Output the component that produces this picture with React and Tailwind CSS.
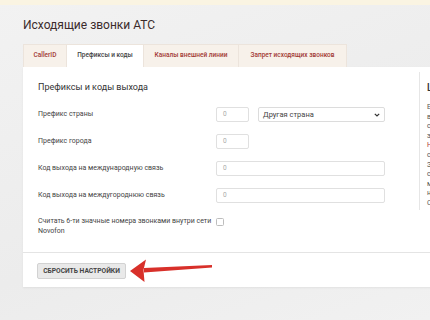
import React from "react";

const tabs = [
  { label: "CallerID", w: "w-[44px]", active: false },
  { label: "Префиксы и коды", w: "w-[77px]", active: true },
  { label: "Каналы внешней линии", w: "w-[95px]", active: false },
  { label: "Запрет исходящих звонков", w: "w-[108px]", active: false },
];

function Input({ className }) {
  return (
    <div className={"h-[15px] border border-[#e0e0e0] rounded-[2px] bg-white flex items-center pl-[6px] text-[6.5px] text-[#aaaaaa] " + className}>
      0
    </div>
  );
}

function Row({ label, children }) {
  return (
    <div className="h-[27px] flex items-center">
      <div className="w-[178px] shrink-0 text-[7px] text-[#444444] whitespace-nowrap">{label}</div>
      <div className="flex items-center">{children}</div>
    </div>
  );
}

export default function App() {
  const side = [
    { t: "Если вы", red: false },
    { t: "страны", red: false },
    { t: "звонки", red: false },
    { t: "Настройки", red: true },
    { t: "страны", red: false },
    { t: "Звонки", red: false },
    { t: "соединения", red: false },
    { t: "международные", red: false },
    { t: "направления", red: false },
    { t: "Обратите", red: false },
    { t: "Меню", red: false },
  ];
  return (
    <div className="relative w-[430px] h-[320px] overflow-hidden bg-[linear-gradient(160deg,#f2f2f2_0%,#ececec_60%,#f1f1f1_100%)] font-['Roboto','Liberation_Sans',sans-serif]">
      <div className="h-[5px] bg-[#faf4e2]" />
      <div className="pl-[23px]">
        <h1 className="pt-[13px] text-[12px] leading-[15px] text-[#3a2b2b] whitespace-nowrap">Исходящие звонки АТС</h1>
        <div className="mt-[11px] flex h-[23px]">
          {tabs.map((t) => (
            <div
              key={t.label}
              className={
                t.w +
                " h-[23px] flex items-center justify-center text-[6.5px] font-medium whitespace-nowrap border-t border-r border-[#ece4dc] " +
                (t.active ? "bg-white text-[#444444]" : "bg-[#f7f1ea] text-[#a23a35]") +
                (t.label === "CallerID" ? " border-l" : "")
              }
            >
              {t.label}
            </div>
          ))}
        </div>
        <div className="w-[420px] bg-white shadow-[0_1px_2px_rgba(0,0,0,0.06)]">
          <div className="h-[185px] flex">
            <div className="w-[396px] shrink-0 pl-[15px]">
              <div className="pt-[13px] h-[34px] text-[9px] leading-[14px] text-[#333333] whitespace-nowrap">Префиксы и коды выхода</div>
              <Row label="Префикс страны">
                <Input className="w-[33px]" />
                <div className="ml-[9px] w-[127px] h-[15px] border border-[#dcdcdc] rounded-[2px] bg-white flex items-center justify-between pl-[4px] pr-[4px] text-[7.5px] text-[#444444]">
                  <span>Другая страна</span>
                  <svg width="6" height="4" viewBox="0 0 6 4" fill="none">
                    <path d="M0.8 0.8 L3 3 L5.2 0.8" stroke="#333" strokeWidth="1.2" />
                  </svg>
                </div>
              </Row>
              <Row label="Префикс города">
                <Input className="w-[33px]" />
              </Row>
              <Row label="Код выхода на международную связь">
                <Input className="w-[169px]" />
              </Row>
              <Row label="Код выхода на междугороднюю связь">
                <Input className="w-[169px]" />
              </Row>
              <div className="mt-[7px] flex items-start">
                <div className="w-[178px] shrink-0 text-[7px] leading-[10px] text-[#444444] whitespace-nowrap">
                  Считать 6-ти значные номера звонками внутри сети
                  <br />
                  Novofon
                </div>
                <div className="mt-[2px] w-[8px] h-[8px] border border-[#bdbdbd] rounded-[1.5px] bg-white" />
              </div>
            </div>
            <div className="mt-[5px] h-[138px] border-l border-[#e6e6e6] pl-[7px] pt-[9px] overflow-hidden">
              <div className="text-[10px] leading-[14px] font-medium text-[#333333]">Цель</div>
              <div className="mt-[8px] text-[7px] leading-[9.6px]">
                {side.map((s, i) => (
                  <div key={i} className={s.red ? "text-[#b03a35]" : "text-[#555555]"}>{s.t}</div>
                ))}
              </div>
            </div>
          </div>
          <div className="border-t border-[#e4e4e4] pt-[10px] pb-[8px] pl-[14px]">
            <div className="w-[89px] h-[16px] bg-[#e9e9e9] border border-[#d2d2d2] rounded-[2px] flex items-center justify-center text-[6.7px] font-bold text-[#444444] whitespace-nowrap">
              СБРОСИТЬ НАСТРОЙКИ
            </div>
          </div>
        </div>
      </div>
      <svg className="absolute left-0 top-0 pointer-events-none" width="430" height="320" viewBox="0 0 430 320">
        <path d="M212 265 L212 267.5 L144 272.5 L144 268 Z" fill="#d8302a" />
        <path d="M130 271 L146 259.5 L143.5 270 L144.5 282 Z" fill="#d8302a" />
      </svg>
    </div>
  );
}
